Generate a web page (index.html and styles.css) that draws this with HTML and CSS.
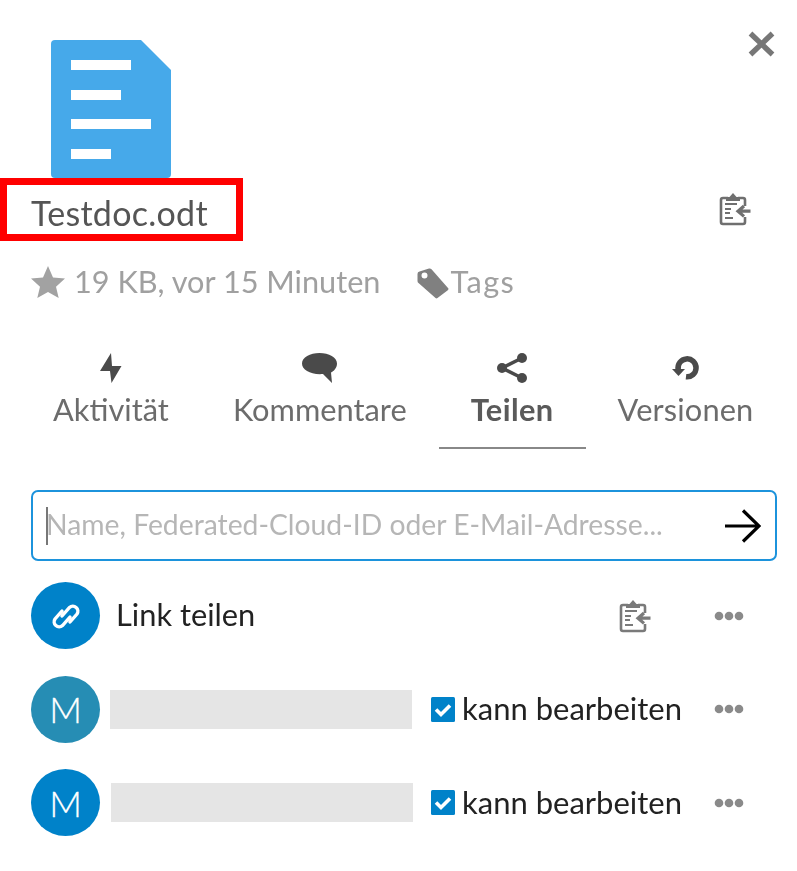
FILE: index.html
```html
<!DOCTYPE html>
<html lang="de">
<head>
<meta charset="utf-8">
<title>Testdoc.odt</title>
<link rel="stylesheet" href="styles.css">
</head>
<body>
<svg class="defs" width="0" height="0" aria-hidden="true">
  <symbol id="clip" viewBox="0 0 32 34">
    <path d="M9 6H4a2 2 0 0 0-2 2v22a2 2 0 0 0 2 2h20a2 2 0 0 0 2-2v-5M26 14V8a2 2 0 0 0-2-2h-5" fill="none" stroke="currentColor" stroke-width="2.6"/>
    <path d="M7 9V5h3.500L14 1l3.500 4H21v4z" fill="currentColor"/>
    <path d="M6 12h12M6 17h6M6 21h5M6 26h8" fill="none" stroke="currentColor" stroke-width="2"/>
    <path d="M31.500 19.200H20M25 14l-6 5.200 6 5.200" fill="none" stroke="currentColor" stroke-width="3.200"/>
  </symbol>
  <symbol id="dots" viewBox="0 0 30 12">
    <circle cx="5" cy="6" r="4.300" fill="currentColor"/>
    <circle cx="15" cy="6" r="4.300" fill="currentColor"/>
    <circle cx="25" cy="6" r="4.300" fill="currentColor"/>
  </symbol>
  <symbol id="check" viewBox="0 0 24 25">
    <rect width="24" height="25" rx="1.500" fill="#0082c9"/>
    <path d="M5 12.500l5 5 9-9" fill="none" stroke="#fff" stroke-width="3.600"/>
  </symbol>
</svg>

<main class="panel">
  <header class="head">
    <svg class="file" viewBox="0 0 120 138" aria-hidden="true">
      <path d="M4 0h86l30 30v104a4 4 0 0 1-4 4H4a4 4 0 0 1-4-4V4a4 4 0 0 1 4-4z" fill="#46a9ea"/>
      <path d="M20 20h60v10H20zM20 50h50v10H20zM20 79h80v10H20zM20 109h40v10H20z" fill="#fff"/>
    </svg>
    <svg class="close" viewBox="0 0 27 26" aria-hidden="true">
      <path d="M2.500 2.500l22 21M24.500 2.500l-22 21" fill="none" stroke="#777" stroke-width="5.400"/>
    </svg>
  </header>

  <div class="title-row">
    <div class="title-box"><h1 class="title">Testdoc.odt</h1></div>
    <svg class="icon-clip"><use href="#clip"/></svg>
  </div>

  <div class="meta">
    <svg class="star" viewBox="0 0 34 32" aria-hidden="true">
      <path d="M17 0l5 11.500 12 1.100-9 8.200 2.700 11.200L17 26l-10.700 6L9 20.800 0 12.600l12-1.100z" fill="#a2a2a2"/>
    </svg>
    <span class="meta-text">19 KB, vor 15 Minuten</span>
    <svg class="tag" viewBox="0 0 32 31" aria-hidden="true">
      <path fill-rule="evenodd" d="M2.500 3.500L12 .5a2.500 2.500 0 0 1 2.500.7L31 20a1.500 1.500 0 0 1-.2 2.200L20.500 30a1.500 1.500 0 0 1-2 0L1.500 15a2.500 2.500 0 0 1-1-2V6a2.500 2.500 0 0 1 2-2.500zM7.500 4.500a3 3 0 1 0 0 6 3 3 0 0 0 0-6z" fill="#808080"/>
    </svg>
    <span class="meta-text meta-tags">Tags</span>
  </div>

  <nav class="tabs">
    <a class="tab">
      <svg class="tab-icon" viewBox="0 0 22 30" width="22" height="30" aria-hidden="true"><path d="M11 0L0 18h10l1.500 12L21.500 13H12z" fill="#4a4a4a"/></svg>
      <span>Aktivität</span>
    </a>
    <a class="tab">
      <svg class="tab-icon" viewBox="0 0 35 30" width="35" height="30" aria-hidden="true"><path d="M17.500 0C27 0 35 4.500 35 10.500c0 4.500-3.500 8-6 9l1 10.500-9-9C9 22 0 17 0 10.500 0 4.500 8 0 17.500 0z" fill="#4a4a4a"/></svg>
      <span>Kommentare</span>
    </a>
    <a class="tab tab-active">
      <svg class="tab-icon" viewBox="0 0 30 30" width="30" height="30" aria-hidden="true"><path d="M25 5L5 15l20 10" fill="none" stroke="#4a4a4a" stroke-width="3.400"/><circle cx="5" cy="15" r="5" fill="#4a4a4a"/><circle cx="25" cy="5" r="5" fill="#4a4a4a"/><circle cx="25" cy="25" r="5" fill="#4a4a4a"/></svg>
      <span>Teilen</span>
    </a>
    <a class="tab tab-last">
      <svg class="tab-icon" viewBox="0 -3.500 27 30" width="27" height="30" aria-hidden="true"><path d="M6.200 13A9 9 0 1 1 14 20.300" fill="none" stroke="#4a4a4a" stroke-width="5.500"/><path d="M0 12.500h13L6.500 19.500z" fill="#4a4a4a"/></svg>
      <span>Versionen</span>
    </a>
  </nav>

  <div class="search">
    <span class="caret"></span>
    <span class="placeholder">Name, Federated-Cloud-ID oder E-Mail-Adresse...</span>
    <svg class="go" viewBox="0 0 36 34" aria-hidden="true"><path d="M0 17h34M18 1.500L34 17 18 32.500" fill="none" stroke="#000" stroke-width="3.200"/></svg>
  </div>

  <ul class="shares">
    <li class="share">
      <span class="avatar avatar-blue">
        <svg class="link" viewBox="0 0 42 40" aria-hidden="true"><path d="M17 20l7.500-8.500a5 5 0 0 1 7.500 6.500l-7 8M25 21l-7.500 8.500a5 5 0 0 1-7.500-6.500l7-8" fill="none" stroke="#fff" stroke-width="3.400" stroke-linecap="round"/></svg>
      </span>
      <span class="link-text">Link teilen</span>
      <svg class="icon-clip icon-clip-row"><use href="#clip"/></svg>
      <svg class="dots"><use href="#dots"/></svg>
    </li>
    <li class="share">
      <span class="avatar avatar-teal">M</span>
      <span class="redacted"></span>
      <label class="perm"><svg class="check"><use href="#check"/></svg><span class="perm-text">kann bearbeiten</span></label>
      <svg class="dots"><use href="#dots"/></svg>
    </li>
    <li class="share">
      <span class="avatar avatar-blue">M</span>
      <span class="redacted redacted-2"></span>
      <label class="perm"><svg class="check"><use href="#check"/></svg><span class="perm-text">kann bearbeiten</span></label>
      <svg class="dots"><use href="#dots"/></svg>
    </li>
  </ul>
</main>
</body>
</html>
```
FILE: styles.css
```css
* { box-sizing: border-box; }
html, body { margin: 0; padding: 0; background: #fff; }
body { font-family: Lato, "Noto Sans", sans-serif; color: #555; height: 871px; overflow: hidden; }
.defs { position: absolute; }
.panel { width: 797px; filter: blur(0.35px); }

.head { height: 178px; display: flex; justify-content: space-between; align-items: flex-start; padding: 40px 22px 0 51px; }
.file { width: 120px; height: 138px; display: block; }
.close { width: 27px; height: 26px; margin-top: -9px; }

.title-row { height: 63px; display: flex; justify-content: space-between; align-items: flex-start; padding-right: 46px; }
.title-box { width: 243px; height: 63px; border: 7px solid #f00; padding: 6px 0 0 24px; }
.title { margin: 0; font-size: 34px; letter-spacing: 0.27px; font-weight: 400; line-height: 43px; color: #555; white-space: nowrap; }
.icon-clip { width: 32px; height: 34px; color: #6f6f6f; flex: none; margin-top: 14px; }

.meta { height: 36px; margin-top: 23px; padding-left: 31px; display: flex; align-items: center; }
.star { width: 34px; height: 32px; margin-right: 9px; }
.meta-text { font-size: 30.7px; line-height: 36px; color: #a0a0a0; white-space: nowrap; }
.meta-tags { letter-spacing: 1.4px; }
.tag { width: 32px; height: 31px; margin-left: 37px; margin-right: 1px; margin-top: 2px; }

.tabs { display: flex; padding-left: 21px; margin-top: 53px; height: 96px; }
.tab { display: flex; flex-direction: column; align-items: center; height: 96px; padding: 0 32px; font-size: 30.8px; line-height: 36px; color: #6c6c6c; white-space: nowrap; }
.tab-icon { display: block; height: 30px; margin-bottom: 9px; }
.tab-active { font-weight: 700; letter-spacing: 0.4px; color: #5a5a5a; border-bottom: 2px solid #888; }
.tab-last { letter-spacing: 0.12px; }

.search { width: 746px; height: 71px; margin: 41px 0 0 31px; border: 2px solid #1c93dc; border-radius: 7px; display: flex; align-items: center; padding: 0 14px 0 13px; }
.caret { width: 2px; height: 38px; background: #777; flex: none; margin-right: -2px; }
.placeholder { flex: 1; font-size: 28.3px; color: #b6b6b6; white-space: nowrap; overflow: hidden; padding-bottom: 4px; }
.go { width: 36px; height: 34px; flex: none; }

.shares { list-style: none; margin: 21px 0 0; padding: 0 0 0 31px; display: grid; grid-auto-rows: 67px; row-gap: 26.5px; }
.share { display: flex; align-items: center; }
.avatar { width: 69px; height: 67px; border-radius: 50%; color: #fff; font-size: 36px; font-weight: 300; -webkit-text-stroke: 0.3px #fff; display: flex; align-items: center; justify-content: center; flex: none; }
.avatar-blue { background: #0082c9; }
.avatar-teal { background: #268db4; }
.link { width: 42px; height: 40px; }
.link-text { margin-left: 16px; margin-bottom: 3px; font-size: 30.8px; color: #222; white-space: nowrap; }
.icon-clip-row { margin: 0 0 0 auto; color: #7a7a7a; }
.dots { width: 30px; height: 12px; color: #8a8a8a; flex: none; margin-left: 63px; margin-right: 53px; }
.redacted { width: 302px; height: 39px; margin-left: 10px; background: #e5e5e5; flex: none; }
.redacted-2 { margin-left: 11px; }
.perm { display: flex; align-items: center; margin-left: auto; font-size: 31px; color: #222; white-space: nowrap; }
.perm-text { margin-bottom: 2px; }
.check { width: 24px; height: 25px; margin-right: 7px; flex: none; }
.share .perm + .dots { margin-left: 32px; }
```
